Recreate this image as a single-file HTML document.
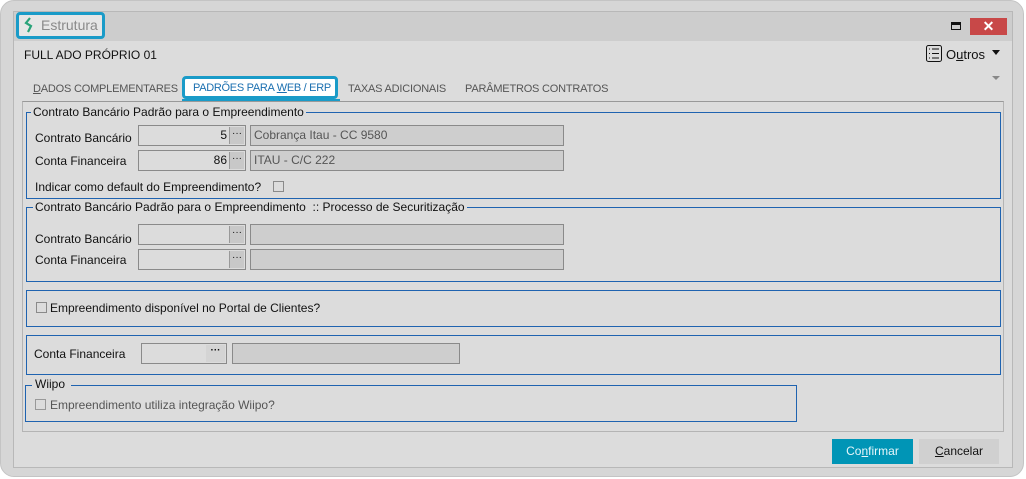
<!DOCTYPE html>
<html><head><meta charset="utf-8"><style>
*{margin:0;padding:0;box-sizing:border-box}
body{width:1026px;height:479px;background:#fff;font-family:"Liberation Sans",sans-serif;font-size:12px;color:#111;position:relative;overflow:hidden}
.a{position:absolute}
.frame{left:0;top:0;width:1024px;height:477px;background:#d6d6d6;border:1px solid #c4c4c4;border-radius:14px}
.win{left:13px;top:11px;width:1000px;height:457px;border:1px solid #b8b8b8;background:#dcdcdc}
.title{left:14px;top:12px;width:998px;height:29px;background:#cdcdcd}
.grp{position:absolute;border:1px solid #1f63b0}
.lg{position:absolute;top:-8px;left:6px;background:#dcdcdc;padding:0 2px;font-size:12px}
.inp{position:absolute;height:21px;border:1px solid #8a8a8a;background:#dcdcdc;text-align:right;padding-right:18px;line-height:19px;font-size:12px}
.btn{position:absolute;top:1px;right:1px;width:15px;height:17px;background:#c8c8c8;border-left:1px solid #999;text-align:center;line-height:13px;font-size:10px}
.desc{position:absolute;height:21px;border:1px solid #8a8a8a;background:#cecece;line-height:19px;padding-left:3px;color:#555;font-size:12px}
.lbl{position:absolute;font-size:12px}
.cb{position:absolute;width:11px;height:11px;border:1px solid #8a8a8a;background:#dcdcdc}
.tab{position:absolute;top:83px;font-size:11px;color:#555;white-space:nowrap}
</style></head><body>
<div class="a frame"></div>
<div class="a win"></div>
<div class="a title"></div>
<div class="a" style="left:16px;top:12px;width:89px;height:27px;border:3px solid #1a9bc8;border-radius:4px;background:#e6e6e6"></div>
<svg class="a" style="left:24px;top:17px" width="10" height="16" viewBox="0 0 10 16"><path d="M6 1 L2 6 L7 9 L4 15" fill="none" stroke="#2aa37a" stroke-width="2.2"/></svg>
<div class="a" style="left:41px;top:17px;font-size:14px;color:#8a8a8a">Estrutura</div>
<div class="a" style="left:951px;top:22px;width:10px;height:8px;border:1.5px solid #111;border-top-width:3px"></div>
<div class="a" style="left:970px;top:18px;width:37px;height:17px;background:#c84848;color:#fff;text-align:center;font-size:14px;line-height:17px;font-weight:bold">✕</div>
<div class="a" style="left:24px;top:48px;font-size:12px">FULL ADO PRÓPRIO 01</div>
<svg class="a" style="left:926px;top:45px" width="16" height="17" viewBox="0 0 16 17"><rect x="0.5" y="0.5" width="15" height="16" rx="2" fill="none" stroke="#111"/><path d="M3 4h1M3 8.5h1M3 13h1M6 4h7M6 8.5h7M6 13h7" stroke="#111"/></svg>
<div class="a" style="left:946px;top:47px;font-size:13px">O<u>u</u>tros</div>
<div class="a" style="left:992px;top:50px;border:4px solid transparent;border-top:5px solid #111"></div>
<div class="a" style="left:992px;top:76px;border:4px solid transparent;border-top:4px solid #888"></div>
<div class="tab" style="left:33px;letter-spacing:-0.2px"><u>D</u>ADOS COMPLEMENTARES</div>
<div class="a" style="left:182px;top:76px;width:156px;height:23px;border:3px solid #1a9bc8;border-radius:4px;background:#fff"></div>
<div class="a" style="left:182px;top:99px;width:158px;height:2px;background:#1a9bc8"></div>
<div class="tab" style="left:193px;top:82px;color:#1a6fb0;letter-spacing:-0.3px">PADRÕES PARA <u>W</u>EB / ERP</div>
<div class="tab" style="left:348px;letter-spacing:-0.2px">TAXAS ADICIONAIS</div>
<div class="tab" style="left:465px;letter-spacing:-0.2px">PARÂMETROS CONTRATOS</div>
<div class="a" style="left:22px;top:101px;width:982px;height:331px;border:1px solid #b4b4b4;border-top-color:#999"></div>

<div class="grp" style="left:26px;top:112px;width:975px;height:87px"><div class="lg" style="left:4px">Contrato Bancário Padrão para o Empreendimento</div></div>
<div class="lbl" style="left:35px;top:131px">Contrato Bancário</div>
<div class="inp" style="left:138px;top:125px;width:108px">5<div class="btn">···</div></div>
<div class="desc" style="left:250px;top:125px;width:314px">Cobrança Itau - CC 9580</div>
<div class="lbl" style="left:35px;top:154px">Conta Financeira</div>
<div class="inp" style="left:138px;top:150px;width:108px">86<div class="btn">···</div></div>
<div class="desc" style="left:250px;top:150px;width:314px">ITAU - C/C 222</div>
<div class="lbl" style="left:35px;top:180px">Indicar como default do Empreendimento?</div>
<div class="cb" style="left:273px;top:181px"></div>

<div class="grp" style="left:26px;top:207px;width:975px;height:75px"><div class="lg">Contrato Bancário Padrão para o Empreendimento&nbsp; :: Processo de Securitização</div></div>
<div class="lbl" style="left:35px;top:232px">Contrato Bancário</div>
<div class="inp" style="left:138px;top:224px;width:108px"><div class="btn">···</div></div>
<div class="desc" style="left:250px;top:224px;width:314px"></div>
<div class="lbl" style="left:35px;top:253px">Conta Financeira</div>
<div class="inp" style="left:138px;top:249px;width:108px"><div class="btn">···</div></div>
<div class="desc" style="left:250px;top:249px;width:314px"></div>

<div class="grp" style="left:26px;top:290px;width:975px;height:37px"></div>
<div class="cb" style="left:36px;top:302px"></div>
<div class="lbl" style="left:50px;top:301px">Empreendimento disponível no Portal de Clientes?</div>

<div class="grp" style="left:26px;top:335px;width:975px;height:40px"></div>
<div class="lbl" style="left:34px;top:347px">Conta Financeira</div>
<div class="inp" style="left:141px;top:343px;width:86px;background:#dcdcdc"><div class="btn" style="border:none;background:#d4d4d4;width:19px;font-weight:bold;line-height:12px;color:#111">···</div></div>
<div class="desc" style="left:232px;top:343px;width:228px"></div>

<div class="grp" style="left:25px;top:385px;width:772px;height:37px"><div class="lg" style="top:-9px;left:6px;padding:0 6px 0 3px">Wiipo</div></div>
<div class="cb" style="left:35px;top:399px;border-color:#999"></div>
<div class="lbl" style="left:50px;top:398px;color:#555">Empreendimento utiliza integração Wiipo?</div>

<div class="a" style="left:832px;top:439px;width:81px;height:25px;background:#0095b6;color:#e6f6fa;text-align:center;line-height:25px">Co<u>n</u>firmar</div>
<div class="a" style="left:919px;top:439px;width:80px;height:25px;background:#d0d0d0;color:#111;text-align:center;line-height:25px"><u>C</u>ancelar</div>
</body></html>
